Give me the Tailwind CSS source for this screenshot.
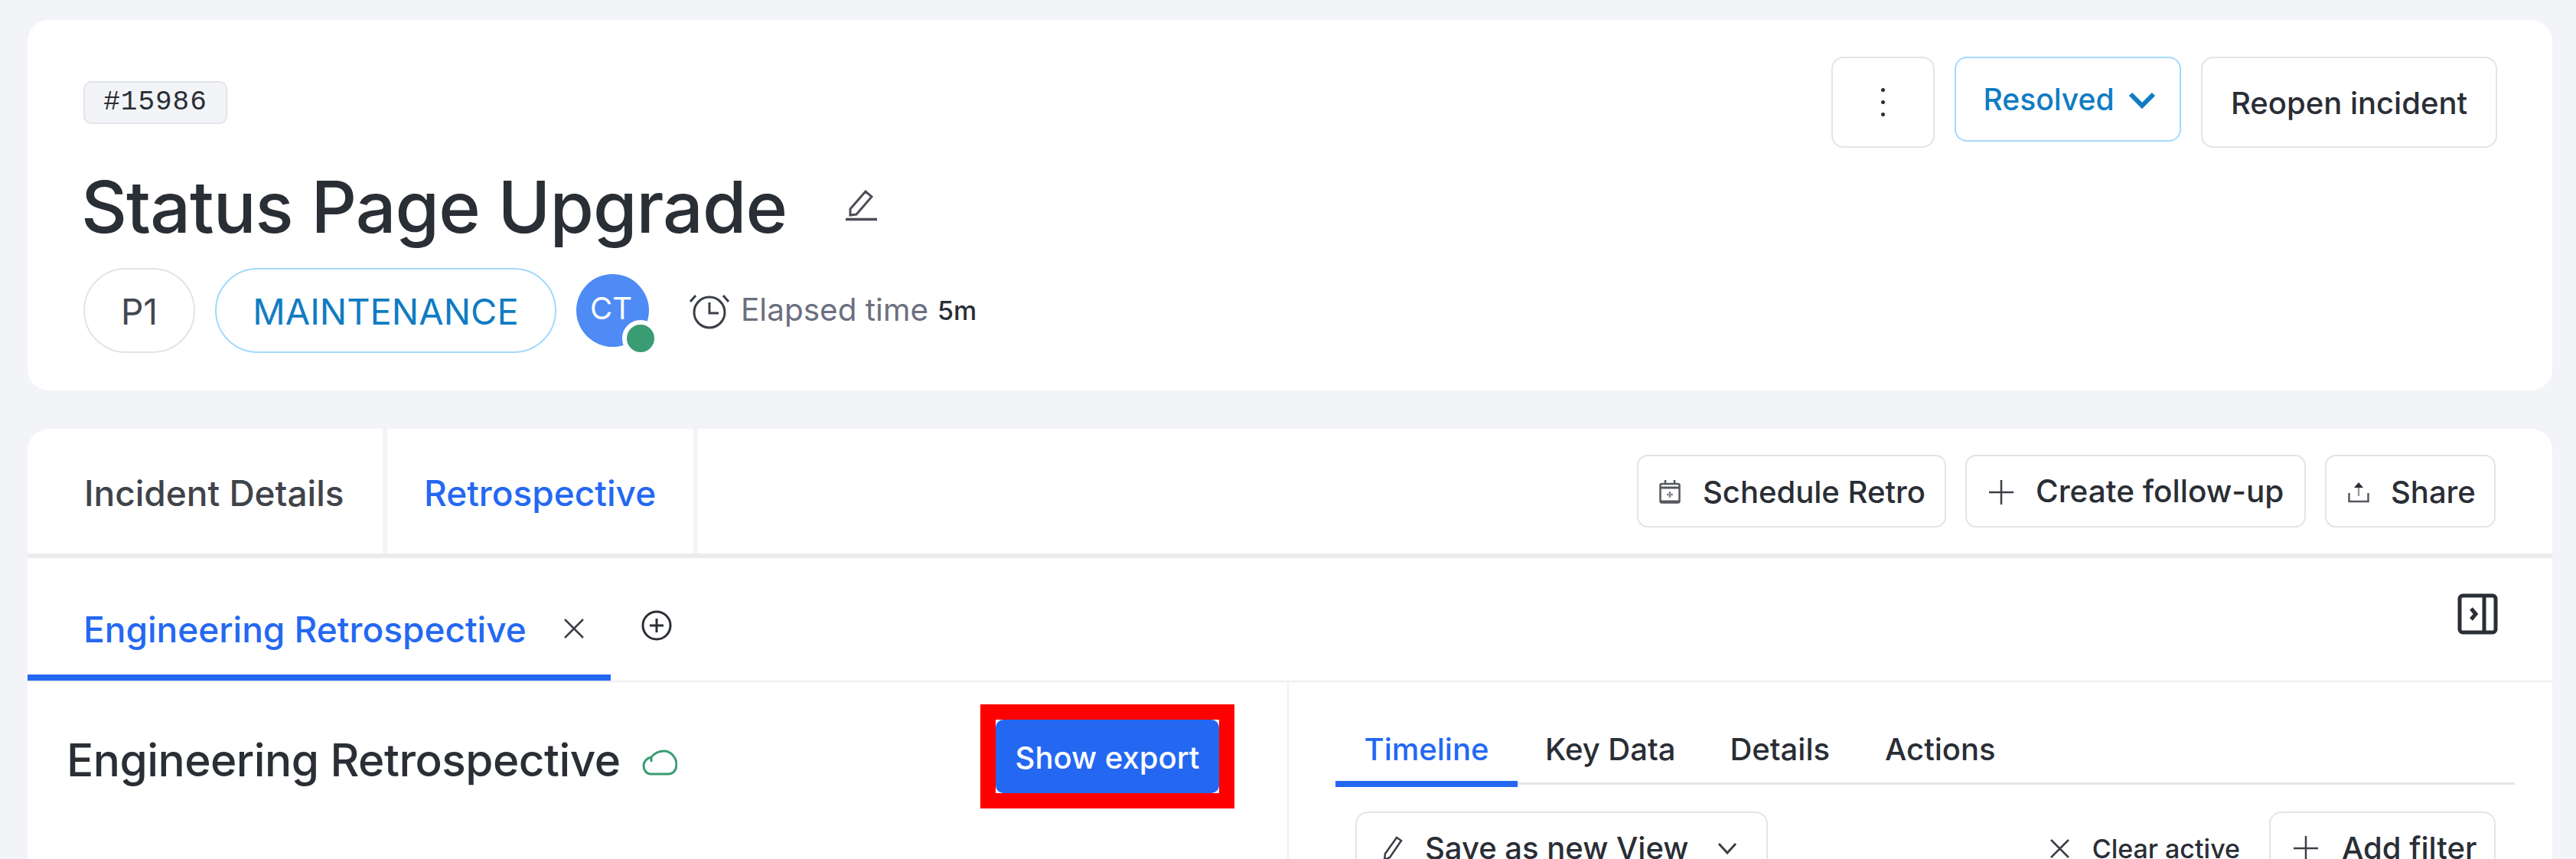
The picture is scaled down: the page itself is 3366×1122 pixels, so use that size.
<!DOCTYPE html>
<html lang="en">
<head>
    <meta charset="UTF-8">
    <title>Status Page Upgrade</title>
    <script src="https://cdn.jsdelivr.net/npm/@tailwindcss/browser@4"></script>
</head>
<body class="bg-[#f2f4f8] text-[#2a2e35] font-['Inter',sans-serif]">
    <div class="h-[1122px] overflow-hidden pt-[26px] pl-[36px] pr-[31px] flex flex-col gap-[50px]">

        <!-- incident header -->
        <section class="shrink-0 bg-white rounded-[28px] h-[484px] pl-[73px] pr-[72px] flex justify-between">
            <div class="pt-[80px]">
                <div class="w-[188px] h-[56px] rounded-[10px] bg-[#f2f4f8] border-2 border-[#e3e4e8] flex items-center justify-center font-['Liberation_Mono',monospace] text-[36px] tracking-[1px]">#15986</div>
                <div class="flex items-center mt-[58px] h-[100px]">
                    <h1 class="ml-[-3px] text-[93px] font-medium tracking-[-1px] leading-none">Status Page Upgrade</h1>
                    <svg class="ml-[77px] mt-[-4px] w-[42px] h-[42px]" viewBox="0 0 42 42" fill="none" stroke="#4b4e57" stroke-width="3"><path d="M6 26 L26 3 L34 10 L14 33 L6 34 Z"/><path d="M0 39.5 H41" stroke-width="3.5"/></svg>
                </div>
                <div class="flex items-center mt-[30px]">
                    <span class="w-[146px] h-[111px] pt-[3px] rounded-full border-2 border-[#e3e4e8] flex items-center justify-center text-[46px] text-[#44474f]">P1</span>
                    <span class="ml-[26px] w-[446px] h-[111px] pt-[3px] rounded-full border-2 border-[#a3d9fb] flex items-center justify-center text-[47px] text-[#0f7cc2]">MAINTENANCE</span>
                    <div class="relative ml-[26px] w-[95px] h-[95px] rounded-full bg-[#4f8bf5] flex items-center justify-center text-white text-[40px]">
                        <span class="-translate-x-[2px] -translate-y-[3px]">CT</span>
                        <span class="absolute right-[-13px] bottom-[-13px] w-[48px] h-[48px] rounded-full bg-[#3a9c73] border-[6px] border-white"></span>
                    </div>
                    <svg class="ml-[52px] w-[54px] h-[50px]" viewBox="0 0 54 50" fill="none" stroke="#3b3f47" stroke-width="3"><circle cx="27" cy="27" r="20"/><path d="M27 14 V28 H39"/><path d="M2 13 L9 5 M52 13 L45 5"/></svg>
                    <span class="ml-[14px] text-[40.5px] text-[#6b6f80]">Elapsed time</span>
                    <span class="ml-[12px] text-[34px] font-medium">5m</span>
                </div>
            </div>
            <div class="pt-[48px] flex items-start gap-[26px]">
                <button class="w-[135px] h-[119px] rounded-[16px] border-2 border-[#e3e4e8] flex flex-col items-center justify-center gap-[11px]">
                    <span class="w-[5px] h-[5px] rounded-full bg-[#2a2e35]"></span>
                    <span class="w-[5px] h-[5px] rounded-full bg-[#2a2e35]"></span>
                    <span class="w-[5px] h-[5px] rounded-full bg-[#2a2e35]"></span>
                </button>
                <button class="w-[296px] h-[111px] pl-[4px] pt-[2px] rounded-[16px] border-2 border-[#a3d9fb] flex items-center justify-center gap-[18px] text-[39px] font-medium text-[#0f7cc2]">
                    Resolved
                    <svg class="w-[36px] h-[24px]" viewBox="0 0 36 24" fill="none" stroke="#0f7cc2" stroke-width="6"><path d="M3 4 L18 19 L33 4"/></svg>
                </button>
                <button class="w-[387px] h-[119px] rounded-[16px] border-2 border-[#e3e4e8] flex items-center justify-center text-[40px] font-medium pt-[2px]">Reopen incident</button>
            </div>
        </section>

        <!-- retrospective card -->
        <section class="shrink-0 bg-white rounded-t-[28px] h-[600px]">
            <div class="h-[169px] border-b-[6px] border-[#ebebeb] flex justify-between pr-[74px]">
                <div class="flex">
                    <div class="w-[470px] pl-[74px] pt-[5px] flex items-center border-r-[6px] border-[#f2f4f8] text-[46px] font-medium text-[#3f434b]">Incident Details</div>
                    <div class="w-[406px] pl-[48px] pt-[5px] flex items-center border-r-[6px] border-[#f2f4f8] text-[46px] font-medium text-[#2468f2]">Retrospective</div>
                </div>
                <div class="flex items-start gap-[25px] pt-[34px]">
                    <button class="w-[404px] h-[95px] pt-[2px] rounded-[14px] border-2 border-[#e3e4e8] flex items-center pl-[27px] gap-[29px] text-[40px] font-medium">
                        <svg class="w-[28px] h-[31px]" viewBox="0 0 28 31" fill="none" stroke="#55585f" stroke-width="2.5"><rect x="1.5" y="5" width="25" height="24.5" rx="2"/><path d="M1.5 10 H26.5" stroke-width="3"/><path d="M8 0 V6 M20 0 V6"/><path d="M1.5 28 H26.5" stroke-width="3"/><path d="M14 15 V23 M10 19 H18" stroke="#8a8d94" stroke-width="2.5"/></svg>
                        Schedule Retro
                    </button>
                    <button class="w-[445px] h-[95px] pt-[2px] rounded-[14px] border-2 border-[#e3e4e8] flex items-center pl-[29px] gap-[29px] text-[40.5px] font-medium">
                        <svg class="w-[32px] h-[32px]" viewBox="0 0 32 32" fill="none" stroke="#3b3f47" stroke-width="2.5"><path d="M16 0 V32 M0 16 H32"/></svg>
                        Create follow-up
                    </button>
                    <button class="w-[223px] h-[95px] pt-[2px] rounded-[14px] border-2 border-[#e3e4e8] flex items-center pl-[28px] gap-[28px] text-[40px] font-medium">
                        <svg class="w-[28px] h-[28px]" viewBox="0 0 28 28" fill="none" stroke="#55585f" stroke-width="2.5"><path d="M14 6 V19" stroke="#9a9da3"/><path d="M8 8 L14 1 L20 8 Z" fill="#2a2e35" stroke="none"/><path d="M1.5 15 V26 H26.5 V15"/></svg>
                        Share
                    </button>
                </div>
            </div>

            <div class="h-[162px] border-b-2 border-[#ededed] flex justify-between relative">
                <div class="w-[762px] border-b-[8px] border-[#2468f2] h-[160px] flex items-start pt-[71px] pl-[73px] mb-[-2px]">
                    <span class="text-[46px] font-medium text-[#2468f2] leading-[44px]">Engineering Retrospective</span>
                </div>
                <svg class="absolute left-[701px] top-[79px] w-[26px] h-[26px]" viewBox="0 0 26 26" fill="none" stroke="#3b3f47" stroke-width="2.5"><path d="M1 1 L25 25 M25 1 L1 25"/></svg>
                <svg class="absolute left-[802px] top-[68px] w-[40px] h-[40px]" viewBox="0 0 40 40" fill="none" stroke="#2a2e35" stroke-width="3"><circle cx="20" cy="20" r="18"/><path d="M20 11 V29 M11 20 H29"/></svg>
                <svg class="mt-[46px] mr-[71px] w-[53px] h-[54px]" viewBox="0 0 53 54" fill="none" stroke="#2a2e35" stroke-width="5"><rect x="3" y="3" width="47" height="48" rx="4"/><path d="M35 3 V51"/><path d="M18 20 L24 27 L18 34" stroke-width="5"/></svg>
            </div>

            <div class="flex h-[300px]">
                <div class="w-[1648px] flex justify-between items-start border-r-2 border-[#f0f0f0] pl-[51px] pr-[69px] pt-[29px]">
                    <div class="flex items-center h-[136px] pt-[11px]">
                        <h2 class="text-[58.5px] font-medium tracking-[-0.5px] leading-none">Engineering Retrospective</h2>
                        <svg class="ml-[28px] mt-[4px] w-[46px] h-[35px]" viewBox="0 0 46 35" fill="none" stroke="#3a9c73" stroke-width="3"><path d="M12 11 C6 12 2 17 2 22 C2 28 6 33 11 33 H34 C41 33 45 27 45 21 C45 11 37 3 29 3 C22 3 16 6 12 11 V17"/></svg>
                    </div>
                    <div class="border-[20px] border-[#ff0000] bg-white">
                        <button class="w-[292px] h-[96px] rounded-[10px] bg-[#2468f2] text-white text-[40px] font-medium pt-[3px]">Show export</button>
                    </div>
                </div>
                <div class="flex-1 pl-[61px] pr-[49px]">
                    <div class="flex items-end h-[134px] border-b-[3px] border-[#e3e4e8] text-[40px] font-medium leading-[48px]">
                        <span class="h-[90px] pt-[17px] w-[238px] border-b-[8px] border-[#2468f2] text-[#2468f2] text-center mb-[-6px]">Timeline</span>
                        <span class="h-[84px] pt-[17px] ml-[36px]">Key Data</span>
                        <span class="h-[84px] pt-[17px] ml-[71px]">Details</span>
                        <span class="h-[84px] pt-[17px] ml-[72px]">Actions</span>
                    </div>
                    <div class="flex justify-between pt-[35px] pl-[26px] pr-[25px]">
                        <button class="shrink-0 w-[539px] h-[96px] rounded-[16px] border-2 border-[#e3e4e8] flex items-center pl-[34px] text-[40px] font-medium">
                            <svg class="w-[26px] h-[34px]" viewBox="0 0 26 34" fill="none" stroke="#3b3f47" stroke-width="2.5"><path d="M3 24 L18 3 L24 7 L9 29 L2 32 Z"/></svg>
                            <span class="ml-[29px]">Save as new View</span>
                            <svg class="ml-[38px] w-[26px] h-[18px]" viewBox="0 0 26 18" fill="none" stroke="#3b3f47" stroke-width="3"><path d="M2 3 L13 15 L24 3"/></svg>
                        </button>
                        <div class="flex items-start">
                            <div class="flex items-center h-[96px] text-[34px] font-medium">
                                <svg class="w-[25px] h-[25px]" viewBox="0 0 25 25" fill="none" stroke="#3b3f47" stroke-width="2.5"><path d="M1 1 L24 24 M24 1 L1 24"/></svg>
                                <span class="ml-[30px]">Clear active</span>
                            </div>
                            <button class="ml-[38px] w-[296px] h-[96px] rounded-[16px] border-2 border-[#e3e4e8] flex items-center pl-[30px] text-[40px] font-medium">
                                <svg class="w-[32px] h-[32px]" viewBox="0 0 32 32" fill="none" stroke="#3b3f47" stroke-width="2.5"><path d="M16 0 V32 M0 16 H32"/></svg>
                                <span class="ml-[31px]">Add filter</span>
                            </button>
                        </div>
                    </div>
                </div>
            </div>
        </section>
    </div>
</body>
</html>
